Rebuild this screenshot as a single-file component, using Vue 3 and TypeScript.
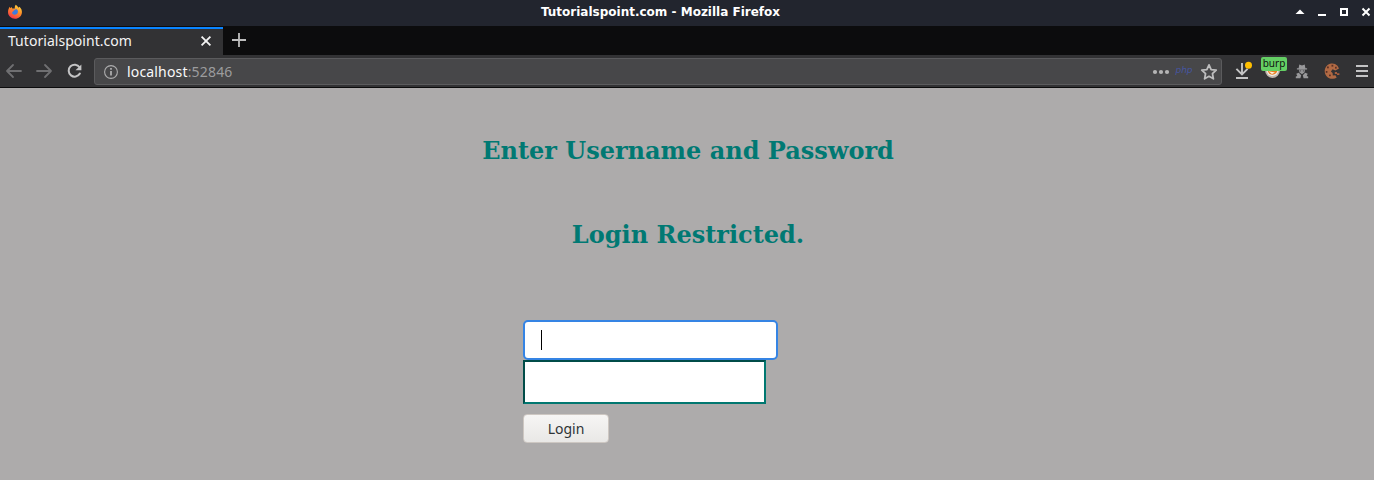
<script setup lang="ts">
import { ref } from 'vue'

const pageTitle = 'Tutorialspoint.com'
const headings: string[] = ['Enter Username and Password', 'Login Restricted.']
const username = ref('')
const password = ref('')
</script>

<template>
  <div class="window">
    <header class="titlebar">
      <svg class="firefox" width="16" height="16" viewBox="0 0 16 16">
        <defs>
          <linearGradient id="fox" x1="0.8" y1="0" x2="0.25" y2="1">
            <stop offset="0" stop-color="#ffdf45" />
            <stop offset="0.45" stop-color="#ff8b25" />
            <stop offset="1" stop-color="#f4304f" />
          </linearGradient>
        </defs>
        <path d="M8.8 0.8 C10 1.8 11 2.7 11.5 3.7 L12.5 2.8 C14.4 4.6 15.1 6.6 14.9 8.8 C14.5 12.4 11.6 14.8 8 14.8 C4.1 14.8 1 11.9 1 8.1 C1 5.7 1.9 3.9 2.8 2.7 L3.3 4.3 L4.5 2.9 L5.3 4.5 L7.8 4.4 C7.7 3 8 1.7 8.8 0.8Z" fill="url(#fox)" />
        <path d="M5.2 5.7 L7.2 6.1 L9.4 5.1 L10.8 6.6 C11.4 8.8 10 10.7 7.9 10.7 C5.8 10.7 4.5 9 5.2 7.5Z" fill="#3e7bdf" />
        <path d="M3.2 6.1 L5.6 5.7 L7.5 6.5 L5.8 7.4 L5.2 8.6 L3.4 8.2Z" fill="#ff7139" />
      </svg>
      <div class="caption">{{ pageTitle }} - Mozilla Firefox</div>
      <svg class="controls" width="82" height="26" viewBox="0 0 82 26" fill="none">
        <path d="M3.5 14 L8 9.5 L12.5 14Z" fill="#fff" />
        <path d="M26 15h8" stroke="#fff" stroke-width="2" />
        <rect x="49" y="9" width="6" height="6" stroke="#fff" stroke-width="2" />
        <path d="M70.5 8.5l7 7m0-7l-7 7" stroke="#fff" stroke-width="2" />
      </svg>
    </header>

    <div class="tabs">
      <div class="tab">
        <span class="tab-label">{{ pageTitle }}</span>
        <svg class="close" width="12" height="12" viewBox="0 0 12 12"><path d="M1.6 1.6l8.8 8.8m0-8.8l-8.8 8.8" stroke="#f4f4f4" stroke-width="1.8" /></svg>
      </div>
      <svg class="plus" width="14" height="14" viewBox="0 0 14 14"><path d="M7 0v14M0 7h14" stroke="#bdbdbd" stroke-width="1.8" /></svg>
    </div>

    <nav class="toolbar">
      <svg width="94" height="32" viewBox="0 0 94 32" fill="none" stroke-linecap="round" stroke-linejoin="round">
        <g stroke="#6f6f71" stroke-width="1.8">
          <path d="M21 16H7M13 10l-6 6 6 6" />
          <path d="M37 16h14M45 10l6 6-6 6" />
        </g>
        <path d="M79.6 12.2A6 6 0 1 0 79.9 18.6" stroke="#c4c4c5" stroke-width="2" />
        <path d="M81.4 9.4v5.9h-5.9z" fill="#c4c4c5" />
      </svg>
      <div class="urlbar">
        <svg width="16" height="16" viewBox="0 0 16 16" fill="none">
          <circle cx="8" cy="8" r="6.4" stroke="#adadae" stroke-width="1.1" />
          <path d="M8 7v4.5M8 4v1.7" stroke="#b8b8b9" stroke-width="1.6" />
        </svg>
        <span class="url">localhost<span class="port">:52846</span></span>
        <svg width="18" height="6" viewBox="0 0 18 6" fill="#b5b5b6">
          <circle cx="3" cy="3" r="2.1" /><circle cx="9" cy="3" r="2.1" /><circle cx="15" cy="3" r="2.1" />
        </svg>
        <span class="php">php</span>
        <svg width="18" height="18" viewBox="0 0 18 18">
          <path d="M9 1.9l2.15 4.65 5.05.65-3.75 3.5.95 5.1L9 13.3l-4.4 2.5.95-5.1L1.8 7.2l5.05-.65z" fill="none" stroke="#bdbdbe" stroke-width="1.8" stroke-linejoin="round" />
        </svg>
      </div>
      <div class="extensions">
        <svg width="152" height="32" viewBox="0 0 152 32" fill="none">
          <path d="M20 8v11M14.4 13.8l5.6 5.6 5.6-5.6M14 23h12" stroke="#c4c4c5" stroke-width="1.9" />
          <circle cx="26.5" cy="10.3" r="3.5" fill="#ffbf00" />
          <circle cx="50.5" cy="15.5" r="7.4" fill="#bfb6ad" />
          <circle cx="50.5" cy="15" r="6" fill="#f0ece5" />
          <circle cx="50.5" cy="14.8" r="4.9" fill="#e77d20" />
          <path d="M46.5 16.3l6.5 1.3-3 1.3z" fill="#fff3df" />
          <g fill="#98989a">
            <path d="M77.3 9.6l2.7 1 2.7-1 .7 3.6h1.7v1.3h-10.2v-1.3h1.7z" />
            <path d="M76.8 14.5h6.4l-.6 2.8-2.6 1.9-2.6-1.9z" />
            <path d="M74.3 18.8l2.5-1 2.4 2.5-.8 2.9h-4.6v-1.6l1.5-.7zM85.7 18.8l-2.5-1-2.4 2.5.8 2.9h4.6v-1.6l-1.5-.7z" />
          </g>
          <path d="M77.6 15.9h1.6m1.6 0h1.6" stroke="#48484a" />
          <path d="M113 8.9A7.7 7.7 0 1 0 114.7 22.5L113.4 20.2 110.8 20.5 110.6 18 108.9 16.5 110.6 14.3 113.3 15.4 117 13.4A7.7 7.7 0 0 0 113 8.9Z" fill="#b06943" />
          <g fill="#5a3025">
            <rect x="105" y="11.5" width="1.8" height="1.8" /><rect x="109.5" y="9.8" width="1.8" height="1.8" /><rect x="103.8" y="16" width="1.6" height="1.8" /><rect x="107" y="19.6" width="1.8" height="1.6" /><rect x="113" y="11.8" width="1.7" height="1.8" />
          </g>
          <path d="M112.8 17h2.2v2h-2.2zM115 18.3h2.4v1.8H115z" fill="#a65e3d" />
          <path d="M134 11h12M134 16h12M134 21h12" stroke="#c4c4c5" stroke-width="2" />
        </svg>
        <span class="badge">burp</span>
      </div>
    </nav>

    <main class="page">
      <h2 v-for="text in headings" :key="text">{{ text }}</h2>
      <form class="login" @submit.prevent>
        <div class="field">
          <span v-if="!username" class="caret"></span>
          <input v-model="username" type="text" aria-label="Username" />
        </div>
        <input v-model="password" class="password" type="password" aria-label="Password" />
        <button type="submit">Login</button>
      </form>
    </main>
  </div>
</template>

<style>
body { margin: 0; background: #adabab; overflow: hidden; }
</style>

<style scoped>
* { box-sizing: border-box; }
svg { display: block; flex-shrink: 0; }
.window { height: 480px; background: #adabab; overflow: hidden; font-family: "Noto Sans", sans-serif; }
.titlebar { height: 26px; background: #22252e; display: flex; align-items: center; padding-left: 7px; }
.firefox { margin-top: -2px; }
.caption { flex: 1; padding-left: 6px; text-align: center; color: #fff; font: bold 12px/24px "DejaVu Sans", sans-serif; height: 26px; }
.tabs { height: 29px; background: #0c0c0d; display: flex; padding-top: 1px; }
.tab { width: 223px; border-top: 2px solid #0a84ff; background: #323234; display: flex; align-items: flex-start; justify-content: space-between; padding: 0 11px 0 8px; }
.tab-label { color: #f4f4f5; font-size: 14px; line-height: 24px; letter-spacing: 0.04px; }
.close { margin-top: 6px; }
.plus { margin: 6px 0 0 9px; }
.toolbar { height: 33px; background: #323234; border-bottom: 1px solid #0c0c0d; display: flex; }
.urlbar { width: 1128px; height: 27px; margin-top: 3px; border: 1px solid #5b5b5d; border-radius: 3px; background: #474749; display: flex; align-items: center; padding: 0 3px 0 8px; }
.url { flex: 1; padding-left: 8px; color: #f9f9fa; font-size: 14px; line-height: 25px; letter-spacing: 0.17px; }
.port { color: #9c9c9e; }
.php { width: 24px; height: 20px; margin-left: 6px; padding-right: 8px; display: flex; justify-content: center; color: #4655a0; font: italic 9px/17px "DejaVu Sans", sans-serif; }
.extensions { position: relative; width: 152px; height: 32px; }
.badge { position: absolute; left: 39px; top: 2px; width: 26px; height: 14px; border-radius: 2px; background: #64cf64; color: #101010; text-align: center; font: 10px/13px "Noto Sans", sans-serif; }
.page { padding-top: 47px; display: flex; flex-direction: column; align-items: center; }
h2 { margin: 0 0 52px 2px; height: 32px; color: #007973; font: bold 24px/32px "DejaVu Serif", serif; white-space: nowrap; }
.login { width: 328px; margin-top: 17px; display: flex; flex-direction: column; align-items: flex-start; }
.field { width: 255px; height: 40px; border: 2px solid #3584e4; border-radius: 5px; background: #fff; display: flex; align-items: center; padding-left: 16px; }
.field input { width: 220px; height: 34px; padding: 0; border: 0; outline: 0; background: transparent; }
.caret { width: 1px; height: 20px; background: #000; }
.password { width: 243px; height: 44px; border: 2px solid; border-color: #004c48 #007770 #007770 #004c48; border-radius: 0; background: #fff; outline: 0; }
button { width: 86px; height: 29px; margin-top: 10px; padding: 0; border: 1px solid #cdc7c2; border-radius: 4px; background: linear-gradient(#f6f5f4, #e9e8e6); color: #2e3436; font: 14px/26px "Noto Sans", sans-serif; }
</style>
